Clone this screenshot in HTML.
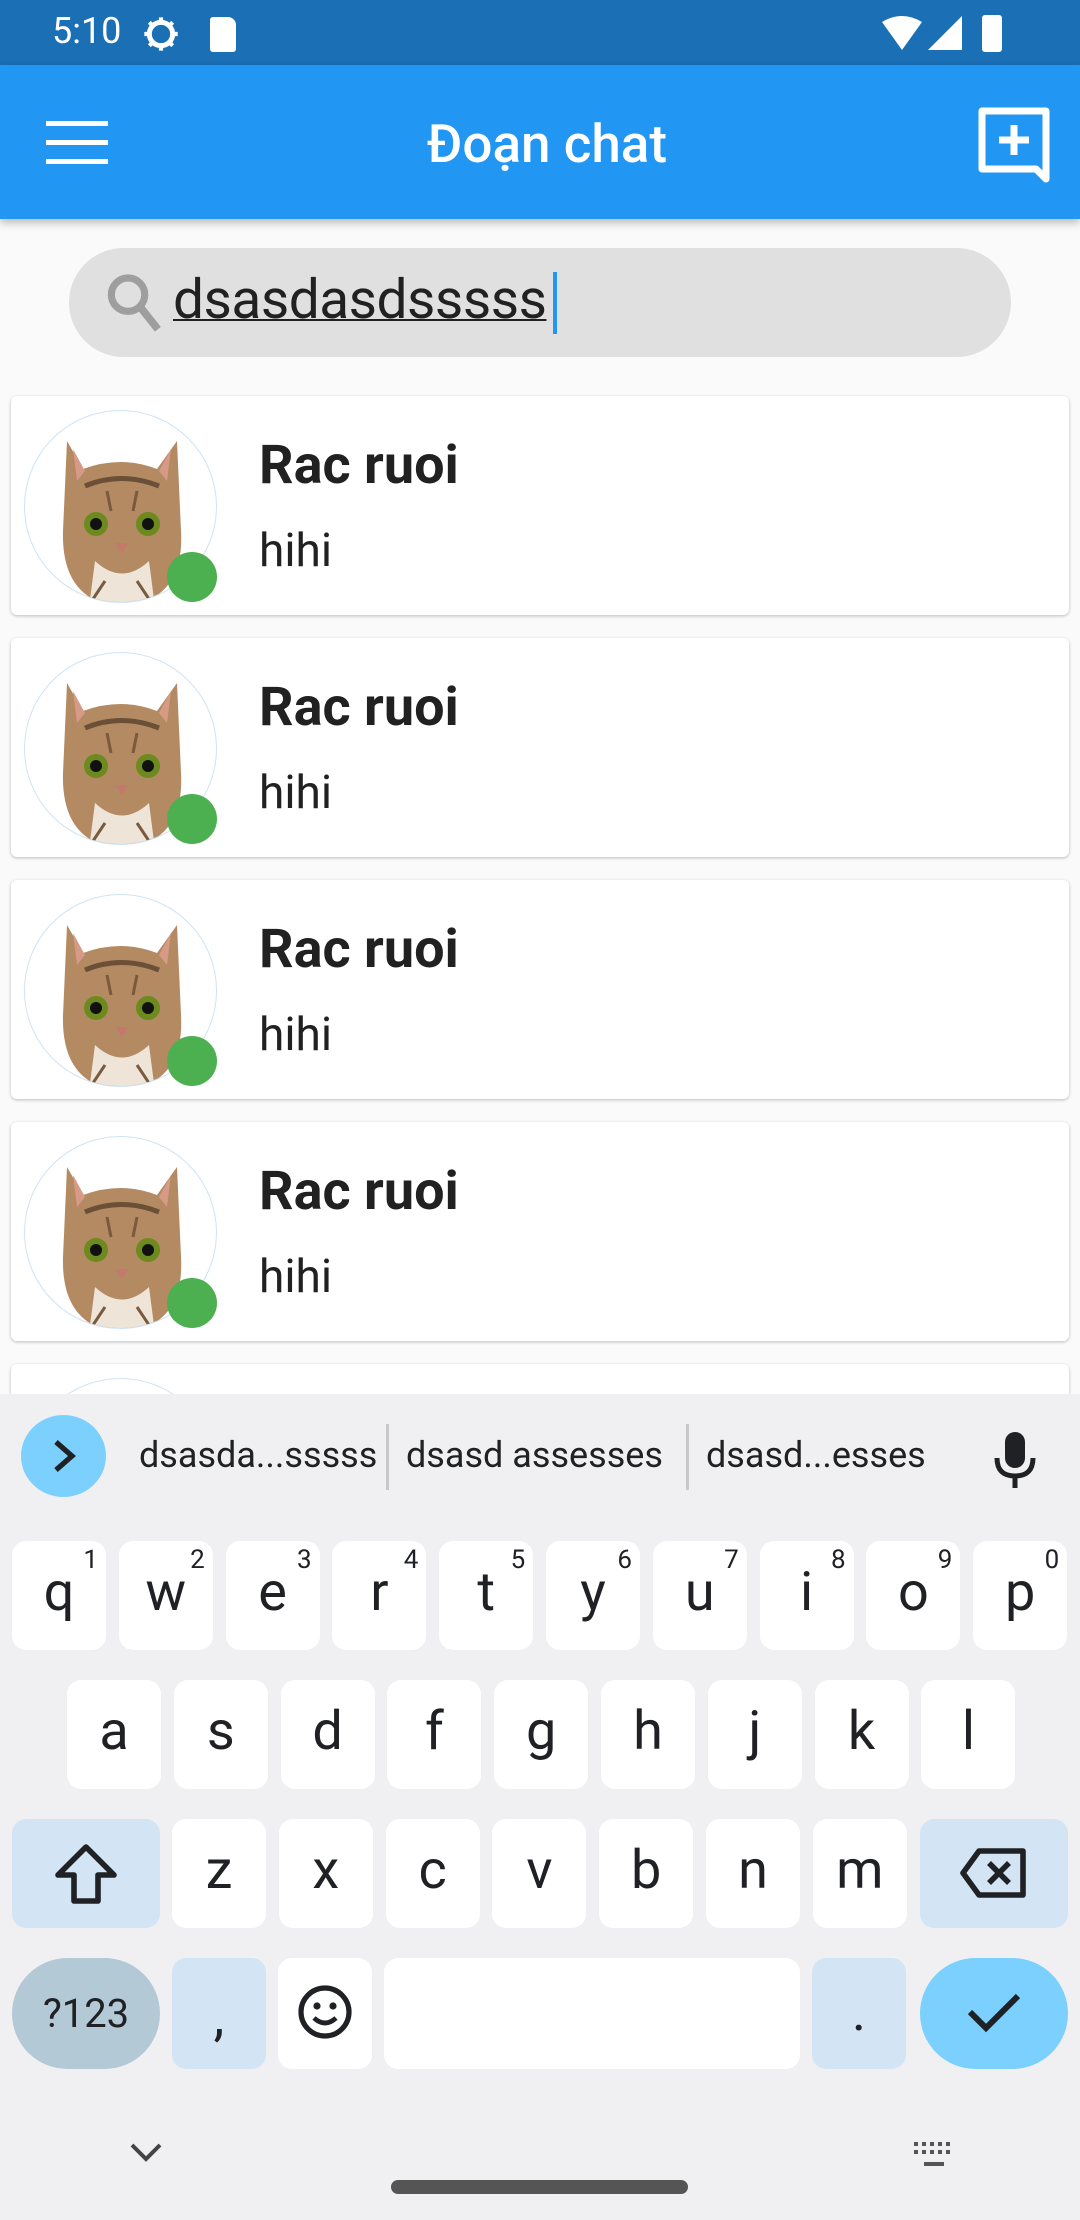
<!DOCTYPE html>
<html><head><meta charset="utf-8"><style>
*{margin:0;padding:0;box-sizing:border-box}
body{width:1080px;height:2220px;overflow:hidden;background:#fafafa;font-family:"Roboto","Liberation Sans",sans-serif;position:relative}
.abs{position:absolute}
.status{left:0;top:0;width:1080px;height:65px;background:#1a6fb5;color:#fff}
.appbar{left:0;top:65px;width:1080px;height:154px;background:#2196f3;box-shadow:0 4px 8px rgba(0,0,0,.25)}
.card{left:11px;width:1058px;height:219px;background:#fff;border-radius:6px;box-shadow:0 1px 3px rgba(0,0,0,.25)}
.av{left:13px;top:14px;width:193px;height:193px;border-radius:50%;border:1px solid #cfe3f5;overflow:hidden;background:#fff}
.dot{left:156px;top:156px;width:50px;height:50px;border-radius:50%;background:#4caf50}
.name{left:248px;top:38px;font-size:54px;font-weight:bold;color:#212121}
.msg{left:248px;top:128px;font-size:46px;color:#212121}
.kb{left:0;top:1394px;width:1080px;height:826px;background:#f0f0f3}
.key{position:absolute;width:94px;height:109px;background:#fff;border-radius:14px;font-size:54px;color:#202124;text-align:center;line-height:104px}
.key sup{position:absolute;right:8px;top:6px;font-size:26px;line-height:26px}
.sug{position:absolute;top:40px;font-size:36px;color:#202124}
</style></head><body>
<div class="abs status">
 <div class="abs" style="left:52px;top:10px;font-size:36px">5:10</div>
 <svg class="abs" style="left:140px;top:14px" width="42" height="40" viewBox="0 0 24 24"><circle cx="12" cy="12" r="7" fill="none" stroke="#fff" stroke-width="3"/><path d="M12 2v4M12 18v4M2 12h4M18 12h4M5 5l3 3M16 16l3 3M5 19l3-3M16 8l3-3" stroke="#fff" stroke-width="2.5"/></svg>
 <div class="abs" style="left:210px;top:17px;width:26px;height:35px;background:#fff;border-radius:3px 8px 3px 3px"></div>
 <svg class="abs" style="left:882px;top:16px" width="40" height="34" viewBox="0 0 20 17"><path d="M0 3Q10-3 20 3L10 17Z" fill="#fff"/></svg>
 <svg class="abs" style="left:928px;top:16px" width="34" height="34" viewBox="0 0 17 17"><path d="M17 0V17H0Z" fill="#fff"/></svg>
 <div class="abs" style="left:982px;top:15px;width:20px;height:37px;background:#fff;border-radius:3px"></div>
</div>
<div class="abs appbar">
 <div class="abs" style="left:46px;top:56px;width:62px;height:5px;background:#fff"></div>
 <div class="abs" style="left:46px;top:75px;width:62px;height:5px;background:#fff"></div>
 <div class="abs" style="left:46px;top:94px;width:62px;height:5px;background:#fff"></div>
 <div class="abs" style="left:427px;top:48px;font-size:53px;font-weight:500;color:#fff">Đoạn chat</div>
 <svg class="abs" style="left:978px;top:42px" width="72" height="80" viewBox="0 0 36 40"><path d="M2 2H34V36L29 31H2Z" fill="none" stroke="#fff" stroke-width="3.5" stroke-linejoin="round"/><path d="M18 9V24M10.5 16.5H25.5" stroke="#fff" stroke-width="3.5"/></svg>
</div>
<div class="abs" style="left:69px;top:248px;width:942px;height:109px;border-radius:55px;background:#e0e0e0">
 <svg class="abs" style="left:36px;top:24px" width="58" height="62" viewBox="0 0 24 26"><circle cx="9.5" cy="9.5" r="7" fill="none" stroke="#9e9e9e" stroke-width="3"/><path d="M14.5 14.5L22 24" stroke="#9e9e9e" stroke-width="3.2"/></svg>
 <div class="abs" style="left:104px;top:20px;font-size:55px;color:#212121;text-decoration:underline;text-decoration-thickness:2px;letter-spacing:-0.5px">dsasdasdsssss</div>
 <div class="abs" style="left:484px;top:24px;width:4px;height:62px;background:#2196f3"></div>
</div>
<div id="cards"></div>
<script>
var tops=[396,638,880,1122,1364];
var cat='<svg width="193" height="193" viewBox="0 0 193 193"><path d="M42 30L58 58Q96 44 132 58L152 30L156 120Q160 190 96 196Q36 190 38 120Z" fill="#b48a62"/><path d="M48 38L60 60L52 70Z M146 38L134 60L142 70Z" fill="#d69a86"/><path d="M60 75Q96 60 134 75" stroke="#6b4f36" stroke-width="5" fill="none"/><circle cx="71" cy="113" r="12" fill="#6c8a1e"/><circle cx="123" cy="113" r="12" fill="#6c8a1e"/><circle cx="71" cy="113" r="6" fill="#111"/><circle cx="123" cy="113" r="6" fill="#111"/><path d="M90 132H104L97 142Z" fill="#c47a6a"/><path d="M70 150Q97 175 124 150L130 196H64Z" fill="#eee4d8"/><path d="M80 170L60 200M112 170L132 200M86 100L82 80M108 100L112 80" stroke="#7a5a3e" stroke-width="3"/></svg>';
var h='';
tops.forEach(function(t,i){
 h+='<div class="abs card" style="top:'+t+'px'+(i==4?';height:40px;overflow:hidden':'')+'"><div class="abs av">'+cat+'</div><div class="abs dot"></div><div class="abs name">Rac ruoi</div><div class="abs msg">hihi</div></div>';
});
document.getElementById('cards').innerHTML=h;
</script>
<div class="abs kb">
 <div class="abs" style="left:21px;top:21px;width:85px;height:82px;border-radius:50%;background:#7bd0fd"></div>
 <svg class="abs" style="left:50px;top:44px" width="28" height="36" viewBox="0 0 14 18"><path d="M3 2L11 9L3 16" fill="none" stroke="#202124" stroke-width="2.6"/></svg>
 <div class="sug" style="left:139px">dsasda...sssss</div>
 <div class="abs" style="left:386px;top:30px;width:3px;height:66px;background:#c8c8c8"></div>
 <div class="sug" style="left:406px">dsasd assesses</div>
 <div class="abs" style="left:686px;top:30px;width:3px;height:66px;background:#c8c8c8"></div>
 <div class="sug" style="left:706px">dsasd...esses</div>
 <svg class="abs" style="left:993px;top:36px" width="44" height="60" viewBox="0 0 22 30"><rect x="6" y="1" width="10" height="18" rx="5" fill="#202124"/><path d="M2 14Q2 23 11 23Q20 23 20 14M11 23V29" fill="none" stroke="#202124" stroke-width="2.5"/></svg>
</div>
<div id="keys"></div>
<script>
var k='';var r1='qwertyuiop',n='1234567890';
for(var i=0;i<10;i++)k+='<div class="key" style="left:'+(12+i*106.8)+'px;top:1541px">'+r1[i]+'<sup>'+n[i]+'</sup></div>';
var r2='asdfghjkl';
for(var i=0;i<9;i++)k+='<div class="key" style="left:'+(67+i*106.8)+'px;top:1680px">'+r2[i]+'</div>';
var r3='zxcvbnm';
for(var i=0;i<7;i++)k+='<div class="key" style="left:'+(172+i*106.8)+'px;top:1819px">'+r3[i]+'</div>';
document.getElementById('keys').innerHTML=k;
</script>
<div class="key" style="left:12px;top:1819px;width:148px;background:#d3e5f5"><svg style="margin-top:24px" width="64" height="62" viewBox="0 0 32 31"><path d="M16 2L30 16H22V29H10V16H2Z" fill="none" stroke="#202124" stroke-width="2.8" stroke-linejoin="round"/></svg></div>
<div class="key" style="left:920px;top:1819px;width:148px;background:#d3e5f5"><svg style="margin-top:28px" width="70" height="52" viewBox="0 0 35 26"><path d="M10 2H32V24H10L2 13Z" fill="none" stroke="#202124" stroke-width="2.8" stroke-linejoin="round"/><path d="M15 8L25 18M25 8L15 18" stroke="#202124" stroke-width="2.8"/></svg></div>
<div class="key" style="left:12px;top:1958px;width:148px;height:111px;border-radius:56px;background:#b3c9d6;font-size:40px;line-height:111px">?123</div>
<div class="key" style="left:172px;top:1958px;height:111px;background:#d3e5f5;line-height:120px">,</div>
<div class="key" style="left:278px;top:1958px;height:111px"><svg style="margin-top:26px" width="56" height="56" viewBox="0 0 28 28"><circle cx="14" cy="14" r="12" fill="none" stroke="#202124" stroke-width="2.6"/><circle cx="10" cy="11" r="1.8" fill="#202124"/><circle cx="18" cy="11" r="1.8" fill="#202124"/><path d="M8.5 17Q14 22 19.5 17" fill="none" stroke="#202124" stroke-width="2.4"/></svg></div>
<div class="key" style="left:384px;top:1958px;width:416px;height:111px"></div>
<div class="key" style="left:812px;top:1958px;height:111px;background:#d3e5f5;line-height:110px">.</div>
<div class="key" style="left:920px;top:1958px;width:148px;height:111px;border-radius:56px;background:#7bd0fd"><svg style="margin-top:32px" width="56" height="44" viewBox="0 0 28 22"><path d="M2 11L10 19L26 3" fill="none" stroke="#202124" stroke-width="3"/></svg></div>
<svg class="abs" style="left:130px;top:2143px" width="32" height="20" viewBox="0 0 16 10"><path d="M1 1L8 8L15 1" fill="none" stroke="#444" stroke-width="2"/></svg>
<svg class="abs" style="left:912px;top:2140px" width="44" height="30" viewBox="0 0 22 15"><path d="M1 2h2M5 2h2M9 2h2M13 2h2M17 2h2M1 6h2M5 6h2M9 6h2M13 6h2M17 6h2M6 12h10" stroke="#555" stroke-width="2"/></svg>
<div class="abs" style="left:391px;top:2180px;width:297px;height:14px;border-radius:7px;background:#555"></div>
</body></html>
